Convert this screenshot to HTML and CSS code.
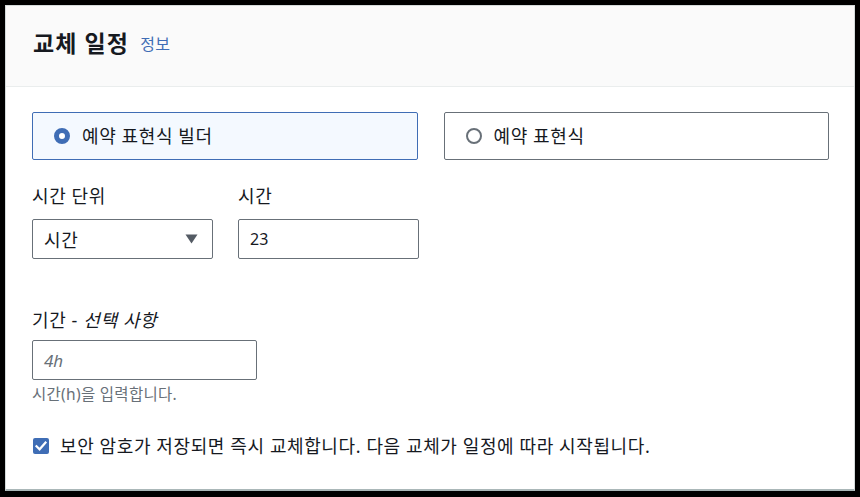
FILE: index.html
```html
<!DOCTYPE html>
<html lang="ko">
<head>
<meta charset="utf-8">
<link rel="stylesheet" href="styles.css">
</head>
<body>
<div class="card">
  <div class="card-header">
    <h2 class="title">교체 일정</h2>
    <a class="info" href="#">정보</a>
  </div>
  <div class="card-body">
    <div class="tiles">
      <div class="tile tile-selected">
        <span class="radio radio-on"></span>
        <span class="tile-label">예약 표현식 빌더</span>
      </div>
      <div class="tile">
        <span class="radio"></span>
        <span class="tile-label">예약 표현식</span>
      </div>
    </div>
    <div class="row">
      <div class="field">
        <div class="label">시간 단위</div>
        <div class="control select">
          <span>시간</span>
          <svg class="caret" width="13" height="10" viewBox="0 0 13 10"><path d="M0.5 0.5 H12.5 L6.5 9.5 Z" fill="#545b64"/></svg>
        </div>
      </div>
      <div class="field">
        <div class="label">시간</div>
        <div class="control"><span class="value">23</span></div>
      </div>
    </div>
    <div class="field duration">
      <div class="label">기간 - <i>선택 사항</i></div>
      <div class="control wide"><span class="placeholder">4h</span></div>
      <div class="help">시간(h)을 입력합니다.</div>
    </div>
    <div class="check-row">
      <span class="checkbox">
        <svg width="16" height="16" viewBox="0 0 16 16"><rect x="0" y="0" width="16" height="16" rx="2" fill="#3f6db5"/><path d="M3.5 8.2 L6.6 11.3 L12.5 4.6" fill="none" stroke="#fff" stroke-width="2.2" stroke-linecap="square"/></svg>
      </span>
      <span class="check-label">보안 암호가 저장되면 즉시 교체합니다. 다음 교체가 일정에 따라 시작됩니다.</span>
    </div>
  </div>
</div>
</body>
</html>
```

FILE: styles.css
```css
html, body {
  margin: 0;
  height: 100%;
}
body {
  background: #000;
  padding: 5px 5px 6px 5px;
  box-sizing: border-box;
  display: flex;
  font-family: "Noto Sans", "Noto Sans CJK KR", sans-serif;
  color: #16191f;
}
.card {
  flex: 1;
  display: flex;
  flex-direction: column;
  background: #fff;
  border: 1px solid #d5dbdb;
  border-bottom: 2px solid #aab7b8;
}
.card-header {
  height: 81px;
  box-sizing: border-box;
  background: #fafafa;
  border-bottom: 1px solid #eaeded;
  display: flex;
  align-items: center;
  padding: 0 26px 7px 27px;
  gap: 11px;
}
.title {
  margin: 0;
  font-size: 23px;
  font-weight: 700;
  letter-spacing: 1.1px;
  line-height: 30px;
}
.info {
  font-size: 16px;
  letter-spacing: 0.5px;
  color: #3f6db5;
  text-decoration: none;
  line-height: 30px;
  margin-top: 2px;
}
.card-body {
  padding: 25px 25px 0 26px;
  font-size: 18px;
  letter-spacing: 0.6px;
}
.tiles {
  display: grid;
  grid-template-columns: 1fr 1fr;
  gap: 26px;
}
.tile {
  height: 48px;
  box-sizing: border-box;
  border: 1px solid #687078;
  border-radius: 2px;
  display: flex;
  align-items: center;
  padding-left: 21px;
  gap: 12px;
}
.tile-selected {
  border-color: #3f6db5;
  background: #f4f9ff;
}
.radio {
  width: 16px;
  height: 16px;
  box-sizing: border-box;
  border-radius: 50%;
  border: 2px solid #687078;
  background: #fff;
}
.radio-on {
  border: 5px solid #3f6db5;
}
.tile-label {
  line-height: 24px;
}
.row {
  display: flex;
  gap: 25px;
  margin-top: 24px;
}
.field {
  display: flex;
  flex-direction: column;
}
.label {
  line-height: 24px;
  margin-bottom: 11px;
}
.control {
  width: 181px;
  height: 40px;
  box-sizing: border-box;
  border: 1px solid #687078;
  border-radius: 2px;
  display: flex;
  align-items: center;
  padding: 0 11px;
}
.select {
  justify-content: space-between;
  padding-right: 14px;
}
.caret {
  display: block;
}
.value {
  font-size: 16px;
  letter-spacing: 0;
}
.duration {
  margin-top: 49px;
}
.duration .label {
  margin-bottom: 8px;
}
.wide {
  width: 225px;
}
.placeholder {
  font-style: italic;
  color: #687078;
  font-size: 17px;
  letter-spacing: 0;
}
.help {
  font-size: 15.5px;
  letter-spacing: 0.3px;
  color: #687078;
  line-height: 18px;
  margin-top: 5px;
}
.check-row {
  display: flex;
  align-items: center;
  gap: 11px;
  margin-top: 31px;
  padding-left: 1px;
}
.checkbox {
  display: flex;
}
.check-label {
  line-height: 24px;
}
```
